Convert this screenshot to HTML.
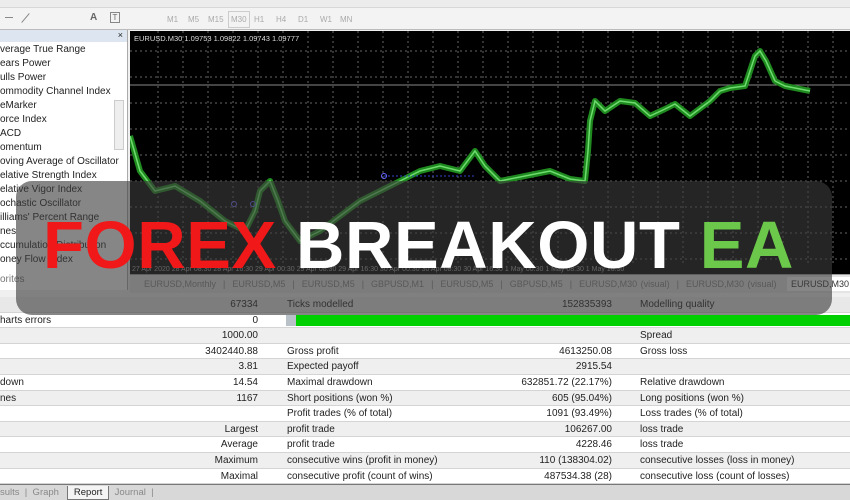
<!DOCTYPE html>
<html><head><meta charset="utf-8">
<style>
*{margin:0;padding:0;box-sizing:border-box}
body{width:850px;height:500px;overflow:hidden;background:#f0f0f0;font-family:"Liberation Sans",sans-serif;position:relative;font-size:10px;color:#222}
.abs{position:absolute}
.tb1{left:0;top:0;width:850px;height:8px;background:#ececec;border-bottom:1px solid #d8d8d8}
.tb2{left:0;top:8px;width:850px;height:22px;background:#f3f3f3;border-bottom:1px solid #bbb}
.tf{color:#aaa;font-size:8px;top:15px}
.left{left:0;top:30px;width:128px;height:260px;background:#fff;border-right:1px solid #aaa}
.left .hd{height:12px;background:#dde6f0}
.left .it{position:absolute;left:0;font-size:10px;color:#222;white-space:nowrap}
.row{position:absolute;left:0;width:850px;height:15.6px;font-size:10px;border-bottom:1px solid #d4d4d4}
.row span{position:absolute;top:2px;white-space:nowrap}
.r1{right:592px;text-align:right}
.l1{left:287px}
.r2{right:238px;text-align:right}
.l2{left:640px}
</style></head><body>
<div class="abs tb1"></div>
<div class="abs tb2"></div>
<div class="abs" style="left:5px;top:17px;width:8px;height:1px;background:#888"></div>
<div class="abs" style="left:25px;top:12px;width:1px;height:12px;background:#888;transform:rotate(40deg)"></div>
<div class="abs" style="left:90px;top:12px;font-size:10px;color:#666;font-weight:bold">A</div>
<div class="abs" style="left:110px;top:12px;width:10px;height:11px;border:1px solid #888;font-size:8px;text-align:center;color:#666">T</div>
<div class="abs tf" style="left:167px">M1</div><div class="abs tf" style="left:188px">M5</div><div class="abs tf" style="left:208px">M15</div>
<div class="abs tf" style="left:228px;border:1px solid #ccc;top:11px;padding:3px 2px">M30</div>
<div class="abs tf" style="left:254px">H1</div><div class="abs tf" style="left:276px">H4</div><div class="abs tf" style="left:298px">D1</div><div class="abs tf" style="left:320px">W1</div><div class="abs tf" style="left:340px">MN</div>

<div class="abs left"><div class="hd"></div><div class="abs" style="right:4px;top:0;font-size:9px">×</div>
<div class="abs" style="right:3px;top:70px;width:10px;height:50px;background:#eee;border:1px solid #ccc"></div>
<div class="it" style="top:14px">verage True Range</div>
<div class="it" style="top:28px">ears Power</div>
<div class="it" style="top:42px">ulls Power</div>
<div class="it" style="top:56px">ommodity Channel Index</div>
<div class="it" style="top:70px">eMarker</div>
<div class="it" style="top:84px">orce Index</div>
<div class="it" style="top:98px">ACD</div>
<div class="it" style="top:112px">omentum</div>
<div class="it" style="top:126px">oving Average of Oscillator</div>
<div class="it" style="top:140px">elative Strength Index</div>
<div class="it" style="top:154px">elative Vigor Index</div>
<div class="it" style="top:168px">ochastic Oscillator</div>
<div class="it" style="top:182px">illiams' Percent Range</div>
<div class="it" style="top:196px">nes</div>
<div class="it" style="top:210px">ccumulation/Distribution</div>
<div class="it" style="top:224px">oney Flow Index</div>
<div class="it" style="top:244px;color:#777">orites</div>
</div>

<svg class="abs" style="left:130px;top:31px" width="720" height="243">
<rect width="720" height="243" fill="#000"/>
<g stroke="#666" stroke-dasharray="2,3" stroke-width="1">
<line x1="0" y1="20" x2="720" y2="20"/><line x1="0" y1="46" x2="720" y2="46"/><line x1="0" y1="72" x2="720" y2="72"/><line x1="0" y1="98" x2="720" y2="98"/><line x1="0" y1="124" x2="720" y2="124"/><line x1="0" y1="150" x2="720" y2="150"/><line x1="0" y1="176" x2="720" y2="176"/><line x1="0" y1="202" x2="720" y2="202"/><line x1="0" y1="228" x2="720" y2="228"/>
<line x1="28" y1="0" x2="28" y2="232"/><line x1="53" y1="0" x2="53" y2="232"/><line x1="78" y1="0" x2="78" y2="232"/><line x1="103" y1="0" x2="103" y2="232"/><line x1="128" y1="0" x2="128" y2="232"/><line x1="153" y1="0" x2="153" y2="232"/><line x1="178" y1="0" x2="178" y2="232"/><line x1="203" y1="0" x2="203" y2="232"/><line x1="228" y1="0" x2="228" y2="232"/><line x1="253" y1="0" x2="253" y2="232"/><line x1="278" y1="0" x2="278" y2="232"/><line x1="303" y1="0" x2="303" y2="232"/><line x1="328" y1="0" x2="328" y2="232"/><line x1="353" y1="0" x2="353" y2="232"/><line x1="378" y1="0" x2="378" y2="232"/><line x1="403" y1="0" x2="403" y2="232"/><line x1="428" y1="0" x2="428" y2="232"/><line x1="453" y1="0" x2="453" y2="232"/><line x1="478" y1="0" x2="478" y2="232"/><line x1="503" y1="0" x2="503" y2="232"/><line x1="528" y1="0" x2="528" y2="232"/><line x1="553" y1="0" x2="553" y2="232"/><line x1="578" y1="0" x2="578" y2="232"/><line x1="603" y1="0" x2="603" y2="232"/><line x1="628" y1="0" x2="628" y2="232"/><line x1="653" y1="0" x2="653" y2="232"/><line x1="678" y1="0" x2="678" y2="232"/><line x1="703" y1="0" x2="703" y2="232"/>
</g>
<line x1="0" y1="54" x2="720" y2="54" stroke="#888" stroke-width="1"/>
<text x="4" y="10" fill="#ddd" font-size="7.5" font-family="Liberation Sans">EURUSD.M30  1.09753 1.09822 1.09743 1.09777</text>
<polyline fill="none" stroke="#1f8a1f" stroke-width="6" stroke-linejoin="round" points="0,105 10,140 25,160 45,155 70,170 95,190 115,200 125,180 130,160 140,150 148,170 155,190 170,210 190,200 210,185 230,170 250,160 270,150 290,140 310,135 330,140 345,120 355,135 370,150 395,145 420,140 440,148 455,150 458,120 460,90 465,70 475,80 490,70 505,72 520,85 535,78 545,73 560,85 580,70 590,60 600,57 615,55 620,40 625,25 630,20 636,30 645,50 655,55 665,57 680,60"/>
<polyline fill="none" stroke="#6fdc6f" stroke-width="1.5" points="0,105 10,140 25,160 45,155 70,170 95,190 115,200 125,180 130,160 140,150 148,170 155,190 170,210 190,200 210,185 230,170 250,160 270,150 290,140 310,135 330,140 345,120 355,135 370,150 395,145 420,140 440,148 455,150 458,120 460,90 465,70 475,80 490,70 505,72 520,85 535,78 545,73 560,85 580,70 590,60 600,57 615,55 620,40 625,25 630,20 636,30 645,50 655,55 665,57 680,60"/>
<line x1="254" y1="145" x2="344" y2="145" stroke="#3344cc" stroke-dasharray="2,2"/>
<circle cx="254" cy="145" r="2.5" fill="none" stroke="#66f"/>
<circle cx="104" cy="173" r="2.5" fill="none" stroke="#66f"/><circle cx="123" cy="173" r="2.5" fill="none" stroke="#66f"/>
<rect x="0" y="232" width="720" height="11" fill="#000"/>
<text x="2" y="240" fill="#aaa" font-size="7" font-family="Liberation Sans">27 Apr 2020  28 Apr 08:30  28 Apr 16:30  29 Apr 00:30  29 Apr 08:30  29 Apr 16:30  30 Apr 00:30  30 Apr 08:30  30 Apr 16:30  1 May 00:30  1 May 08:30  1 May 16:30</text>
</svg>
<div class="abs" style="left:130px;top:274px;width:720px;height:19px;background:#e4e4e4;border-top:1px solid #999;font-size:9px;color:#888;padding-top:4px;white-space:nowrap;word-spacing:1px">&nbsp;&nbsp;&nbsp;&nbsp;EURUSD,Monthly &nbsp;| &nbsp;EURUSD,M5 &nbsp;| &nbsp;EURUSD,M5 &nbsp;| &nbsp;GBPUSD,M1 &nbsp;| &nbsp;EURUSD,M5 &nbsp;| &nbsp;GBPUSD,M5 &nbsp;| &nbsp;EURUSD,M30 (visual) &nbsp;| &nbsp;EURUSD,M30 (visual) &nbsp;&nbsp;<span style="background:#fff;color:#333;padding:2px 4px">EURUSD,M30 (visual</span></div>

<div class="abs" style="left:0;top:297px;width:850px;height:190px;background:#fff">
<div class="row" style="top:0;background:#e8e8e8"><span class="r1">67334</span><span class="l1">Ticks modelled</span><span class="r2">152835393</span><span class="l2">Modelling quality</span></div>
<div class="row" style="top:15.6px;background:#fff"><span style="left:0">harts errors</span><span class="r1">0</span><div class="abs" style="left:286px;top:2px;width:564px;height:11px;background:#00d000;border-left:10px solid #b8c0c8"></div></div>
<div class="row" style="top:31.2px;background:#efefef"><span class="r1">1000.00</span><span class="l2">Spread</span></div>
<div class="row" style="top:46.8px;background:#fff"><span class="r1">3402440.88</span><span class="l1">Gross profit</span><span class="r2">4613250.08</span><span class="l2">Gross loss</span></div>
<div class="row" style="top:62.4px;background:#efefef"><span class="r1">3.81</span><span class="l1">Expected payoff</span><span class="r2">2915.54</span></div>
<div class="row" style="top:78px;background:#fff"><span style="left:0">down</span><span class="r1">14.54</span><span class="l1">Maximal drawdown</span><span class="r2">632851.72 (22.17%)</span><span class="l2">Relative drawdown</span></div>
<div class="row" style="top:93.6px;background:#efefef"><span style="left:0">nes</span><span class="r1">1167</span><span class="l1">Short positions (won %)</span><span class="r2">605 (95.04%)</span><span class="l2">Long positions (won %)</span></div>
<div class="row" style="top:109.2px;background:#fff"><span class="l1">Profit trades (% of total)</span><span class="r2">1091 (93.49%)</span><span class="l2">Loss trades (% of total)</span></div>
<div class="row" style="top:124.8px;background:#efefef"><span class="r1">Largest</span><span class="l1">profit trade</span><span class="r2">106267.00</span><span class="l2">loss trade</span></div>
<div class="row" style="top:140.4px;background:#fff"><span class="r1">Average</span><span class="l1">profit trade</span><span class="r2">4228.46</span><span class="l2">loss trade</span></div>
<div class="row" style="top:156px;background:#efefef"><span class="r1">Maximum</span><span class="l1">consecutive wins (profit in money)</span><span class="r2">110 (138304.02)</span><span class="l2">consecutive losses (loss in money)</span></div>
<div class="row" style="top:171.6px;background:#fff"><span class="r1">Maximal</span><span class="l1">consecutive profit (count of wins)</span><span class="r2">487534.38 (28)</span><span class="l2">consecutive loss (count of losses)</span></div>
</div>
<div class="abs" style="left:0;top:484px;width:850px;height:16px;background:#d8d8d8;border-top:1px solid #777;font-size:9.5px;color:#888;white-space:nowrap;padding-top:2px">sults &nbsp;| &nbsp;Graph &nbsp;&nbsp;<span style="background:#f4f4f4;color:#222;padding:1px 6px;border:1px solid #777;border-top:none">Report</span> &nbsp;Journal &nbsp;|</div>

<div class="abs" style="left:16px;top:181px;width:816px;height:134px;background:rgba(60,60,60,0.62);border-radius:16px"></div>
<div class="abs" style="left:43px;top:206px;font-size:67px;font-weight:bold;white-space:nowrap;letter-spacing:0.6px;line-height:80px"><span style="color:#f01818">FOREX</span> <span style="color:#fff">BREAKOUT</span> <span style="color:#6cc84a">EA</span></div>
</body></html>
